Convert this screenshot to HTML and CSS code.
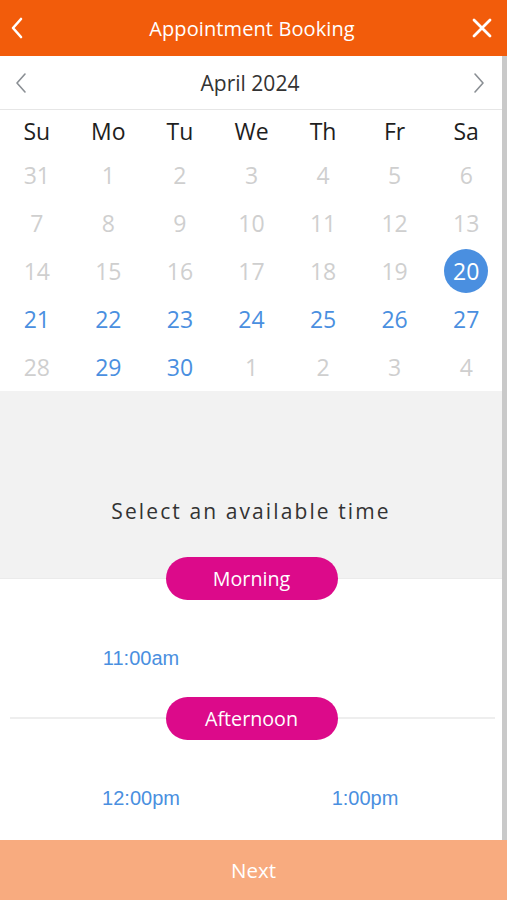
FILE: index.html
```html
<!DOCTYPE html>
<html>
<head>
<meta charset="utf-8">
<link rel="stylesheet" href="styles.css">
</head>
<body>
<div class="app">
  <header class="topbar">
    <svg class="top-icon" width="14" height="22" viewBox="0 0 14 22"><path d="M11 2 L3 11 L11 20" fill="none" stroke="#fff" stroke-width="2.6" stroke-linecap="round" stroke-linejoin="round"/></svg>
    <div class="title">Appointment Booking</div>
    <svg class="top-icon" width="20" height="20" viewBox="0 0 20 20"><path d="M2 2 L18 18 M18 2 L2 18" fill="none" stroke="#fff" stroke-width="2.8" stroke-linecap="round"/></svg>
  </header>
  <div class="body">
    <main class="content">
      <div class="monthbar">
        <svg width="12" height="22" viewBox="0 0 12 22"><path d="M10 2 L2 11 L10 20" fill="none" stroke="#8a8f94" stroke-width="1.6" stroke-linecap="round" stroke-linejoin="round"/></svg>
        <div class="month">April 2024</div>
        <svg width="12" height="22" viewBox="0 0 12 22"><path d="M2 2 L10 11 L2 20" fill="none" stroke="#8a8f94" stroke-width="1.6" stroke-linecap="round" stroke-linejoin="round"/></svg>
      </div>
      <div class="calendar">
        <div class="wd">Su</div><div class="wd">Mo</div><div class="wd">Tu</div><div class="wd">We</div><div class="wd">Th</div><div class="wd">Fr</div><div class="wd">Sa</div>
        <div class="day off">31</div><div class="day off">1</div><div class="day off">2</div><div class="day off">3</div><div class="day off">4</div><div class="day off">5</div><div class="day off">6</div>
        <div class="day off">7</div><div class="day off">8</div><div class="day off">9</div><div class="day off">10</div><div class="day off">11</div><div class="day off">12</div><div class="day off">13</div>
        <div class="day off">14</div><div class="day off">15</div><div class="day off">16</div><div class="day off">17</div><div class="day off">18</div><div class="day off">19</div><div class="day"><span class="sel">20</span></div>
        <div class="day on">21</div><div class="day on">22</div><div class="day on">23</div><div class="day on">24</div><div class="day on">25</div><div class="day on">26</div><div class="day on">27</div>
        <div class="day off">28</div><div class="day on">29</div><div class="day on">30</div><div class="day off">1</div><div class="day off">2</div><div class="day off">3</div><div class="day off">4</div>
      </div>
      <div class="prompt">Select an available time</div>
      <div class="divider first"><span class="pill">Morning</span></div>
      <div class="times"><div class="time">11:00am</div></div>
      <div class="divider lined"><span class="pill">Afternoon</span></div>
      <div class="times last"><div class="time">12:00pm</div><div class="time">1:00pm</div></div>
    </main>
    <div class="scrollbar"></div>
  </div>
  <footer class="next">Next</footer>
</div>
</body>
</html>
```
FILE: styles.css
```css
* { box-sizing: border-box; }
html, body { margin: 0; padding: 0; }
body {
  font-family: "Open Sans", "Noto Sans", sans-serif;
  background: #fff;
  width: 507px;
  height: 900px;
  overflow: hidden;
}
.app { display: flex; flex-direction: column; height: 900px; }
.topbar {
  height: 56px;
  background: #f25c0b;
  display: flex;
  align-items: center;
  justify-content: space-between;
  padding: 0 15px 0 10px;
  flex: none;
}
.title {
  color: #fff;
  font-size: 20px;
  letter-spacing: 0.1px;
  margin-left: 8px;
}
.body { flex: 1; display: flex; min-height: 0; }
.content { width: 502px; display: flex; flex-direction: column; }
.scrollbar { width: 5px; background: #c9c9c9; }
.monthbar {
  height: 54px;
  display: flex;
  align-items: center;
  justify-content: space-between;
  padding: 0 17px 0 15px;
  border-bottom: 1px solid #e6e6e6;
}
.month { font-size: 21px; color: #333; }
.calendar {
  display: grid;
  grid-template-columns: repeat(7, 1fr);
  grid-template-rows: 41px repeat(5, 48px);
  padding-left: 1px;
}
.wd, .day {
  display: flex;
  align-items: center;
  justify-content: center;
  font-size: 23px;
}
.wd { color: #1e1e1e; }
.off { color: #cfcfcf; }
.on { color: #4a8fe0; }
.sel {
  width: 44px;
  height: 44px;
  border-radius: 50%;
  background: #4a8fe0;
  color: #fff;
  display: flex;
  align-items: center;
  justify-content: center;
}
.prompt {
  height: 166px;
  background: #f2f2f2;
  display: flex;
  align-items: flex-end;
  justify-content: center;
  padding-bottom: 32px;
  font-size: 21px;
  letter-spacing: 2.1px;
  color: #333;
}
.divider {
  height: 43px;
  display: flex;
  align-items: center;
  justify-content: center;
  position: relative;
}
.divider.first { background: linear-gradient(#f2f2f2 21px, #ebebeb 21px, #ebebeb 22px, #fff 22px); }
.divider.lined::before {
  content: "";
  position: absolute;
  left: 10px;
  right: 7px;
  top: 20px;
  height: 2px;
  background: #eeeeee;
}
.pill {
  position: relative;
  width: 172px;
  height: 43px;
  border-radius: 22px;
  background: #dc0a8a;
  color: #fff;
  font-size: 19.7px;
  display: flex;
  align-items: center;
  justify-content: center;
  margin-left: 1px;
}
.times {
  display: grid;
  grid-template-columns: 224px 224px;
  padding: 40px 27px 0 29px;
  height: 97px;
}
.time {
  font-family: "Liberation Sans", Arial, sans-serif;
  font-size: 20px;
  color: #4a8fe0;
  height: 36px;
  line-height: 36px;
  text-align: center;
}
.next {
  height: 60px;
  flex: none;
  background: #f8ab7f;
  color: #fff;
  font-size: 20.5px;
  display: flex;
  align-items: center;
  justify-content: center;
}
```
